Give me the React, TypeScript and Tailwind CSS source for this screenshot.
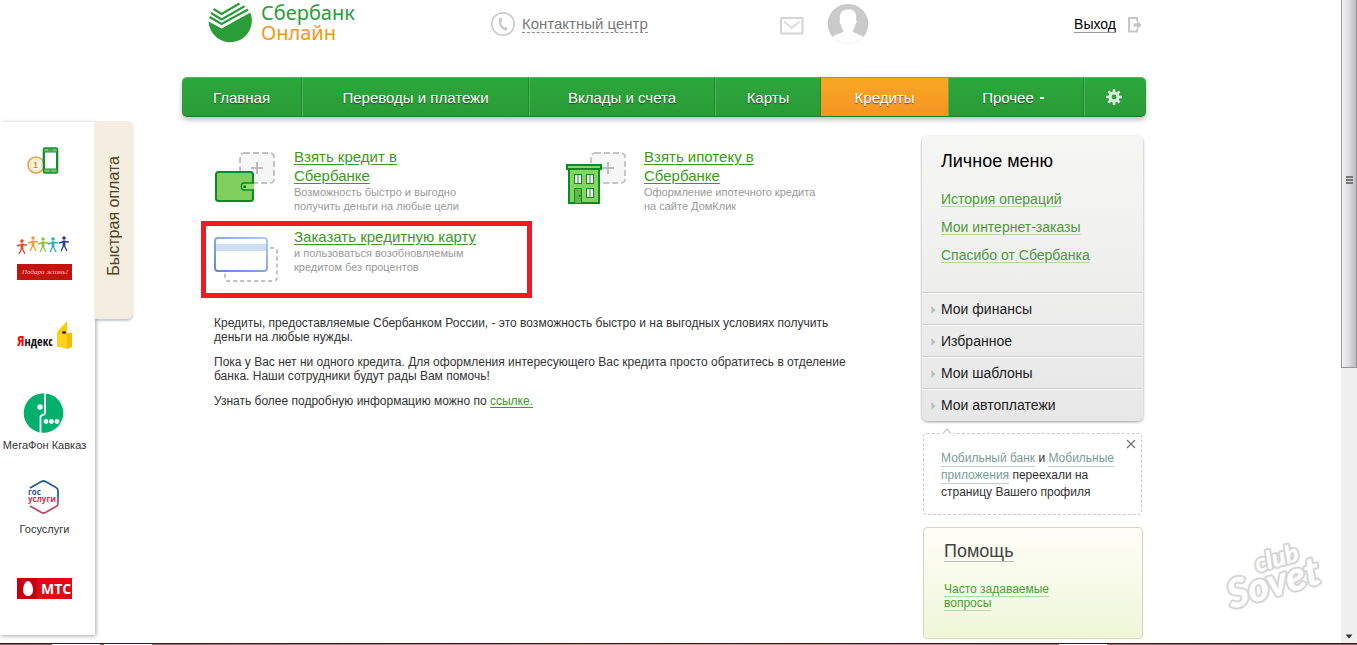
import type { ReactNode } from 'react'

type NavItem = { label: string; active?: boolean; dropdown?: boolean }

const NAV: NavItem[] = [
    { label: 'Главная' },
    { label: 'Переводы и платежи' },
    { label: 'Вклады и счета' },
    { label: 'Карты' },
    { label: 'Кредиты', active: true },
    { label: 'Прочее', dropdown: true },
]

const MENU_LINKS = ['История операций', 'Мои интернет-заказы', 'Спасибо от Сбербанка']
const MENU_SECTIONS = ['Мои финансы', 'Избранное', 'Мои шаблоны', 'Мои автоплатежи']

function SberLogo() {
    return (
        <svg width="44" height="44" viewBox="0 0 44 44" aria-hidden="true">
            <path d="M0.5 21.5 L13.500 28.500 L42.300 12.500 A21.700 21.700 0 1 1 0.5 21.5Z" fill="#2a9d38" />
            <g fill="none" stroke="#2a9d38" strokeWidth="2.200">
                <path d="M1.500 17 L13.500 24 L40 9.500" />
                <path d="M3 13 L13.500 19.500 L36.500 6.200" />
                <path d="M5.500 9 L13.500 14 L31.500 3.500" />
            </g>
        </svg>
    )
}

function PhoneIcon() {
    return (
        <svg width="24" height="24" viewBox="0 0 24 24" aria-hidden="true">
            <circle cx="12" cy="12" r="11.2" fill="none" stroke="#c8c8c8" strokeWidth="1.5" />
            <path d="M8.4 6.6 L10.4 6 L11 9 L9.6 10.3 C10 13 11.6 15 13.6 16 L15 15 L16.4 17 L14.6 18.4 C10.6 17.4 7.4 12.6 8.4 6.6Z" fill="#c4c4c4" stroke="#c4c4c4" strokeWidth="0.6" />
        </svg>
    )
}

function MailIcon() {
    return (
        <svg width="24" height="18" viewBox="0 0 24 18" aria-hidden="true">
            <rect x="1" y="1" width="21.5" height="15.5" rx="1" fill="none" stroke="#d4d4d4" strokeWidth="2" />
            <path d="M4 4.5 L11.8 11 L19.5 4.5" fill="none" stroke="#cdcdcd" strokeWidth="1.2" />
        </svg>
    )
}

function Avatar() {
    return (
        <svg width="40" height="40" viewBox="0 0 40 40" aria-hidden="true">
            <circle cx="20" cy="20" r="19.6" fill="#fff" stroke="#eee" strokeWidth="0.8" />
            <path d="M20 0 A20 20 0 0 1 35.5 33 C33 30.5 26 29.5 25 27.5 C24.6 25.5 27 24 27.3 20.5 C29 19 28.6 16.5 28 15.5 C29 9 26.5 5.5 20.5 5.5 C14 5 11 9.5 12 15.5 C11.4 17 11.6 19.5 12.8 20.5 C13.2 24 15.4 25.5 15.2 27.5 C14 29.5 6.5 30.5 4.5 33 A20 20 0 0 1 20 0Z" fill="#cacaca" />
        </svg>
    )
}

function ExitIcon() {
    return (
        <svg width="14" height="16" viewBox="0 0 14 16" aria-hidden="true">
            <path d="M9 4 V1 H1 V14.5 H9 V12" fill="none" stroke="#c6c6c6" strokeWidth="2" />
            <path d="M5.5 6.5 H9 V3.5 L13.8 8 L9 12.2 V9.5 H5.5Z" fill="#c6c6c6" />
        </svg>
    )
}

function GearIcon() {
    return (
        <svg width="16" height="16" viewBox="-8 -8 16 16" aria-hidden="true">
            <g stroke="#d9efdb" strokeWidth="2.6">
                <path d="M0 -8 V-4 M0 8 V4 M-8 0 H-4 M8 0 H4" />
                <path d="M-5.6 -5.6 L-3 -3 M5.6 5.6 L3 3 M-5.6 5.6 L-3 3 M5.6 -5.6 L3 -3" />
            </g>
            <circle r="4" fill="none" stroke="#d9efdb" strokeWidth="3.2" />
        </svg>
    )
}

function WalletIcon() {
    return (
        <svg width="64" height="56" viewBox="0 0 64 56" aria-hidden="true">
            <rect x="26" y="3" width="34" height="30" rx="4" fill="#f7f7f7" stroke="#c2c2c2" strokeWidth="2" strokeDasharray="6 3" />
            <path d="M43 12 V24 M37 18 H49" stroke="#bdbdbd" strokeWidth="2" />
            <rect x="2" y="22" width="37" height="29" rx="2.5" fill="#80cf5e" stroke="#0a8a26" strokeWidth="2" />
            <path d="M40 33 H30 C26.500 33 26.500 40 30 40 H40" fill="#93de72" stroke="#0a8a26" strokeWidth="1.4" />
            <rect x="29.500" y="35.500" width="2.500" height="2.500" fill="#056f1c" />
        </svg>
    )
}

function HouseIcon() {
    return (
        <svg width="64" height="56" viewBox="0 0 64 56" aria-hidden="true">
            <rect x="27" y="3" width="34" height="30" rx="4" fill="#f7f7f7" stroke="#c6c6c6" strokeWidth="2" strokeDasharray="6 3" />
            <path d="M44 12 V24 M38 18 H50" stroke="#bdbdbd" strokeWidth="2" />
            <rect x="5" y="19" width="30" height="34" fill="#85d45f" stroke="#0a8a26" strokeWidth="2" />
            <rect x="3" y="15" width="34" height="4" fill="#8bd868" stroke="#0a8a26" strokeWidth="2" />
            <g fill="#fff" stroke="#0a8a26">
                <rect x="10.500" y="24.500" width="7" height="9" />
                <rect x="22.500" y="24.500" width="7" height="9" />
                <rect x="22.500" y="38.500" width="7" height="9" />
            </g>
            <path d="M14 25 V33 M26 25 V33 M26 39 V47" stroke="#7cc98e" strokeWidth="2" />
            <path d="M10.500 53 V38.500 H17.500 V53" fill="#5fb848" stroke="#0a8a26" />
            <rect x="15" y="45" width="1.500" height="1.500" fill="#056f1c" />
        </svg>
    )
}

function CardIcon() {
    return (
        <svg width="64" height="56" viewBox="0 0 64 56" aria-hidden="true">
            <defs>
                <linearGradient id="card-edge" x1="0" x2="1" y1="1" y2="0">
                    <stop offset="0" stopColor="#6287cf" />
                    <stop offset="1" stopColor="#a9cdf5" />
                </linearGradient>
            </defs>
            <rect x="11" y="18" width="52" height="33" rx="3" fill="none" stroke="#c2c2c2" strokeWidth="2" strokeDasharray="4 3" />
            <rect x="1" y="8" width="52" height="33" rx="3" fill="#fdfdfa" stroke="url(#card-edge)" strokeWidth="2" />
            <rect x="2" y="14" width="50" height="7" fill="#cddff3" />
        </svg>
    )
}

function MobilePayIcon() {
    return (
        <svg width="56" height="64" viewBox="0 0 56 64" aria-hidden="true">
            <circle cx="19" cy="32" r="8" fill="#fffaf0" stroke="#e5a243" strokeWidth="1.600" />
            <circle cx="19" cy="32" r="5.500" fill="none" stroke="#f4d9a5" />
            <text x="16" y="35" fontSize="9" fontWeight="700" fill="#dd8a1e" fontFamily="Liberation Sans">1</text>
            <rect x="26.500" y="15" width="14" height="25" rx="1.500" fill="#73c66a" stroke="#168a34" strokeWidth="1.600" />
            <rect x="27.500" y="19" width="12" height="17" fill="#fff" stroke="#168a34" />
            <path d="M31 17 H36 M32.500 38 H34.500" stroke="#168a34" />
        </svg>
    )
}

const PEOPLE = [
    { x: 5, y: 24, color: '#e8482f' },
    { x: 16, y: 21, color: '#f39b32' },
    { x: 26, y: 22, color: '#8cc442' },
    { x: 36, y: 22, color: '#29b3b0' },
    { x: 47, y: 21, color: '#2e3a9c' },
]

function PodariLogo() {
    return (
        <svg width="56" height="64" viewBox="0 0 56 64" aria-hidden="true">
            {PEOPLE.map(p => (
                <g key={p.x} stroke={p.color} fill="none" strokeWidth="1.300">
                    <circle cx={p.x} cy={p.y} r="1.500" fill={p.color} strokeWidth="0.500" />
                    <path d={`M${p.x - 5} ${p.y + 5} L${p.x} ${p.y + 3.5} L${p.x + 5} ${p.y + 4}`} strokeWidth="1.700" />
                    <path d={`M${p.x} ${p.y + 2.5} V${p.y + 8}`} strokeWidth="2.800" />
                    <path d={`M${p.x - 3} ${p.y + 13} L${p.x} ${p.y + 7} L${p.x + 3} ${p.y + 13}`} />
                </g>
            ))}
            <rect y="47" width="55" height="16" fill="#c5120f" />
            <text x="5" y="57" fontSize="7" fontStyle="italic" fill="#f3c9c6" fontFamily="Liberation Serif">Подари жизнь!</text>
        </svg>
    )
}

function YandexLogo() {
    return (
        <svg width="56" height="64" viewBox="0 0 56 64" aria-hidden="true">
            <text y="45" fontSize="12" fill="#111" fontFamily="Liberation Sans Narrow, Open Sans Condensed, DejaVu Sans Condensed, sans-serif">
                <tspan fill="#f00" fontSize="15">Я</tspan>ндекс
            </text>
            <path d="M40 31 L50 20 V32 H55 V46 H40Z" fill="#ffcc00" />
            <path d="M50 32 H55 V46 L50 48Z" fill="#f7b900" />
            <path d="M40 31 L50 35 V48 L40 45Z" fill="#ffd21a" />
            <ellipse cx="47" cy="31.500" rx="2" ry="1.300" fill="#111" />
        </svg>
    )
}

function MegafonLogo() {
    return (
        <svg width="56" height="54" viewBox="0 0 56 54" aria-hidden="true">
            <circle cx="26.500" cy="28" r="19.800" fill="#00b06c" />
            <path d="M28 8 V28 C28 31 23.500 29 23.500 32 V48" fill="none" stroke="#fff" strokeWidth="1.800" />
            <g fill="#fff">
                <circle cx="23" cy="22" r="2.700" />
                <circle cx="29" cy="36.500" r="2.400" />
                <circle cx="34.500" cy="36.500" r="2.400" />
                <circle cx="40" cy="36.500" r="2.400" />
            </g>
        </svg>
    )
}

function GosuslugiLogo() {
    return (
        <svg width="56" height="54" viewBox="0 0 56 54" aria-hidden="true">
            <g fill="none" strokeWidth="1.800" strokeLinejoin="round">
                <path d="M13 19 L24.500 12.500 Q26.500 11.500 28.500 12.500 L39 18.500 Q41 19.500 41 22 V28" stroke="#1f5c99" />
                <path d="M41 28 V34 Q41 36.500 39 37.500 L28.500 43.500 Q26.500 44.500 24.500 43.500 L13 37" stroke="#c04a66" />
            </g>
            <g fontSize="8" fontWeight="700" fontFamily="Open Sans, sans-serif">
                <text x="11" y="26" fill="#1f5c99">гос</text>
                <text x="11" y="33" fill="#c8324f">услуги</text>
            </g>
        </svg>
    )
}

function MtsLogo() {
    return (
        <svg width="56" height="64" viewBox="0 0 56 64" aria-hidden="true">
            <rect y="25" width="55" height="21" fill="#e30613" />
            <rect y="25" width="20" height="21" fill="#c5000e" />
            <path d="M11 28 C14 28 16 33.500 16 37 C16 40.500 14 43 11 43 C8 43 6 40.500 6 37 C6 33.500 8 28 11 28Z" fill="#fff" />
            <text x="24" y="41" fontSize="14" fontWeight="700" fill="#fff" fontFamily="Open Sans, sans-serif">МТС</text>
        </svg>
    )
}

function Watermark() {
    return (
        <svg width="130" height="122" viewBox="-13 -10 130 122" className="absolute right-0 bottom-0" aria-hidden="true">
            <g
                fontFamily="Lato, sans-serif"
                fontStyle="italic"
                fontWeight="900"
                strokeLinejoin="round"
                paintOrder="stroke"
                stroke="#d6d6d6"
                fill="#fff"
                strokeWidth="4"
                transform="rotate(-16 50 45)"
            >
                <text x="35" y="37" fontSize="25">club</text>
                <text x="0" y="65" fontSize="40">Sovet</text>
            </g>
        </svg>
    )
}

const PROVIDERS: { name: string; icon: ReactNode; caption?: boolean }[] = [
    { name: 'Мобильная связь', icon: <MobilePayIcon /> },
    { name: 'Подари жизнь', icon: <PodariLogo /> },
    { name: 'Яндекс', icon: <YandexLogo /> },
    { name: 'МегаФон Кавказ', icon: <MegafonLogo />, caption: true },
    { name: 'Госуслуги', icon: <GosuslugiLogo />, caption: true },
    { name: 'МТС', icon: <MtsLogo /> },
]

function QuickPay() {
    return (
        <aside className="flex shrink-0 items-start pt-[121px]">
            <ul className="mt-px h-[513px] w-[95px] bg-white pt-[11px] pr-[6px] shadow-[1px_1px_4px_rgba(0,0,0,0.35)]">
                {PROVIDERS.map(p => (
                    <li key={p.name} className="h-[84px]">
                        <a href="#" aria-label={p.name} className="flex flex-col items-center text-[11px] leading-[12px] whitespace-nowrap text-[#333]">
                            {p.icon}
                            {p.caption && p.name}
                        </a>
                    </li>
                ))}
            </ul>
            <button className="flex h-[198px] w-[38px] items-center justify-center rounded-r-md bg-[#f4ede0] pb-2 shadow-[0_2px_2px_rgba(140,150,170,0.5)]">
                <span className="rotate-180 text-[16px] leading-5 text-[#4f4423] [writing-mode:vertical-rl]">Быстрая оплата</span>
            </button>
        </aside>
    )
}

function Header() {
    return (
        <header className="flex h-[77px] items-start pr-[4px] pl-[26px]">
            <a href="#" className="flex gap-[9px]">
                <SberLogo />
                <span className="flex flex-col pt-[3px] font-['Noto_Sans',sans-serif] text-[20px] leading-5 text-[#2a9d38]">
                    Сбербанк
                    <span className="text-[#f7931e]">Онлайн</span>
                </span>
            </a>
            <a href="#" className="ml-[136px] flex h-[48px] items-center gap-[7px] text-[15px] text-[#777]">
                <PhoneIcon />
                <span className="border-b border-dashed border-[#888] leading-[17px]">Контактный центр</span>
            </a>
            <div className="ml-[132px] flex h-[48px] items-center gap-6">
                <a href="#" aria-label="Письма" className="pt-1"><MailIcon /></a>
                <a href="#" aria-label="Профиль"><Avatar /></a>
            </div>
            <a href="#" className="ml-auto flex h-[50px] items-center gap-3 text-[14px] text-black">
                <span className="border-b border-[#999] leading-[15px]">Выход</span>
                <ExitIcon />
            </a>
        </header>
    )
}

function Nav() {
    return (
        <nav className="grid h-10 grid-cols-[120fr_227fr_186fr_106fr_127fr_136fr_62fr] overflow-hidden rounded-[5px] border-t border-b border-t-[#55b660] border-b-[#1c7f2b] bg-linear-to-b from-[#2da73b] to-[#2a9b37] text-[15px] text-white text-shadow-[0_1px_1px_rgba(0,0,0,0.5)]">
            {NAV.map(item => (
                <a
                    key={item.label}
                    href="#"
                    className={
                        item.active
                            ? 'flex items-center justify-center bg-linear-to-b from-[#f7a823] to-[#f59424] pt-0.5'
                            : 'flex items-center justify-center border-r border-l border-r-[#1f8a2e] border-l-[#4fb35a] pt-0.5 first:border-l-0'
                    }
                >
                    {item.label}
                    {item.dropdown && <span className="mr-1.5 ml-1.5 h-0.5 w-1 bg-white" />}
                </a>
            ))}
            <button aria-label="Настройки" className="flex items-center justify-center border-l border-[#4fb35a] pr-1">
                <GearIcon />
            </button>
        </nav>
    )
}

function Offer({ icon, title, text, highlighted }: { icon: ReactNode; title: ReactNode; text: string; highlighted?: boolean }) {
    return (
        <article className={`flex gap-4 border-[5px] px-2 pt-px ${highlighted ? 'border-[#ed1c24] pb-[7px]' : 'border-transparent pb-[3px]'}`}>
            <div className="shrink-0 pt-[3px]">{icon}</div>
            <div>
                <a href="#" className="block text-[15px] leading-[19px] text-[#3a9b20] underline underline-offset-2">{title}</a>
                <p className="w-[184px] text-[11px] leading-[14px] text-[#999]">{text}</p>
            </div>
        </article>
    )
}

function Sidebar() {
    return (
        <aside className="mr-[3px] w-[221px] shrink-0 pt-[19px]">
            <section className="rounded-md bg-linear-to-b from-[#f6f6f5] to-[#e7e7e7] pb-px shadow-[0_1px_3px_rgba(0,0,0,0.4)]">
                <h2 className="px-[19px] pt-[14px] text-[18px] leading-[22px] text-black">Личное меню</h2>
                <ul className="px-[19px] pt-[13px] pb-[23px]">
                    {MENU_LINKS.map(link => (
                        <li key={link} className="text-[14px] leading-7">
                            <a href="#" className="text-[#4f9a37] underline decoration-[#b5d6a8] underline-offset-2">{link}</a>
                        </li>
                    ))}
                </ul>
                {MENU_SECTIONS.map(name => (
                    <a
                        key={name}
                        href="#"
                        className="flex h-8 items-center gap-[5px] border-t border-[#d0d0d0] pt-0.5 pl-[9px] text-[14px] text-[#222] inset-shadow-[0_1px_0_#fafafa]"
                    >
                        <svg width="5" height="8" viewBox="0 0 5 8" aria-hidden="true"><path d="M0.500 0 L4.500 4 L0.500 8Z" fill="#bdbdbd" /></svg>
                        {name}
                    </a>
                ))}
            </section>

            <section className="relative mt-3 mr-px ml-px rounded-sm border border-dashed border-[#c9c9c9] px-[17px] pt-4 pb-[13px] text-[12px] leading-[17px] text-[#333]">
                <svg width="14" height="7" viewBox="0 0 14 7" className="absolute -top-1.5 left-4 bg-white" aria-hidden="true">
                    <path d="M3 5.500 L7 1 L11 5.500" fill="none" stroke="#c9c9c9" strokeWidth="1.200" />
                </svg>
                <button aria-label="Закрыть" className="absolute top-[5px] right-[5px]">
                    <svg width="10" height="10" viewBox="0 0 10 10"><path d="M1 1 L9 9 M9 1 L1 9" stroke="#777" strokeWidth="1.400" /></svg>
                </button>
                <a href="#" className="text-[#7a9c9a] underline decoration-[#bcd0cc] underline-offset-4">Мобильный банк</a> и{' '}
                <a href="#" className="text-[#7a9c9a] underline decoration-[#bcd0cc] underline-offset-4">Мобильные приложения</a>{' '}
                переехали на страницу Вашего профиля
            </section>

            <section className="mt-3 ml-px h-28 rounded-[4px] border border-[#d9d5bd] bg-linear-to-b from-[#fffef8] to-[#eff6d8] px-5 pt-3">
                <h2 className="text-[18px] leading-[22px]">
                    <a href="#" className="border-b border-[#bbb] text-[#444]">Помощь</a>
                </h2>
                <p className="w-[120px] pt-5 text-[12px] leading-[14px]">
                    <a href="#" className="text-[#4a9d35] underline decoration-[#b5dba8] underline-offset-3">Часто задаваемые вопросы</a>
                </p>
            </section>
        </aside>
    )
}

function Scrollbar() {
    return (
        <div className="flex w-4 shrink-0 flex-col items-center bg-[#f0f0f0] pb-1" aria-hidden="true">
            <div className="flex h-[368px] w-full flex-col items-center gap-px border border-t-0 border-[#97979b] bg-linear-to-r from-[#f3f3f3] via-[#dcdcdd] to-[#bdbec3] pt-[176px]">
                <span className="h-0.5 w-[7px] bg-[#777]" />
                <span className="h-0.5 w-[7px] bg-[#777]" />
                <span className="h-0.5 w-[7px] bg-[#777]" />
            </div>
            <svg width="8" height="5" viewBox="0 0 8 5" className="mt-auto"><path d="M0.500 0.500 H7.500 L4 4.500Z" fill="#333" /></svg>
        </div>
    )
}

export default function App() {
    return (
        <div className="flex min-h-screen flex-col bg-white font-['Liberation_Sans',Arial,sans-serif]">
            <div className="flex flex-1">
                <div className="relative flex flex-1">
                    <QuickPay />
                    <div className="mr-[195px] ml-[49px] flex-1">
                        <Header />
                        <div className="rounded-[5px] shadow-[0_3px_5px_rgba(0,0,0,0.25)]">
                            <Nav />
                        </div>
                        <div className="flex">
                            <main className="mr-10 ml-[19px] flex-1 pt-6">
                                <div className="grid grid-cols-2 gap-x-[19px]">
                                    <Offer icon={<WalletIcon />} title={<>Взять кредит в<br />Сбербанке</>} text="Возможность быстро и выгодно получить деньги на любые цели" />
                                    <Offer icon={<HouseIcon />} title={<>Взять ипотеку в<br />Сбербанке</>} text="Оформление ипотечного кредита на сайте ДомКлик" />
                                    <Offer icon={<CardIcon />} title="Заказать кредитную карту" text="и пользоваться возобновляемым кредитом без процентов" highlighted />
                                </div>
                                <div className="space-y-[11px] px-[13px] pt-[18px] text-[12px] leading-[14px] text-[#333]">
                                    <p>Кредиты, предоставляемые Сбербанком России, - это возможность быстро и на выгодных условиях получить деньги на любые нужды.</p>
                                    <p>Пока у Вас нет ни одного кредита. Для оформления интересующего Вас кредита просто обратитесь в отделение банка. Наши сотрудники будут рады Вам помочь!</p>
                                    <p>
                                        Узнать более подробную информацию можно по <a href="#" className="text-[#3a9b20] underline underline-offset-2">ссылке.</a>
                                    </p>
                                </div>
                            </main>
                            <Sidebar />
                        </div>
                    </div>
                    <Watermark />
                </div>
                <Scrollbar />
            </div>
            <div className="flex h-0.5 border-t border-[#3a1a1c] bg-linear-to-r from-[#9a5f5c] via-[#e89a95] to-[#9a5f5c]">
                <span className="ml-[52px] w-12 bg-white" />
                <span className="ml-1 w-12 bg-white" />
                <span className="mr-[250px] ml-auto w-12 bg-white" />
            </div>
        </div>
    )
}
